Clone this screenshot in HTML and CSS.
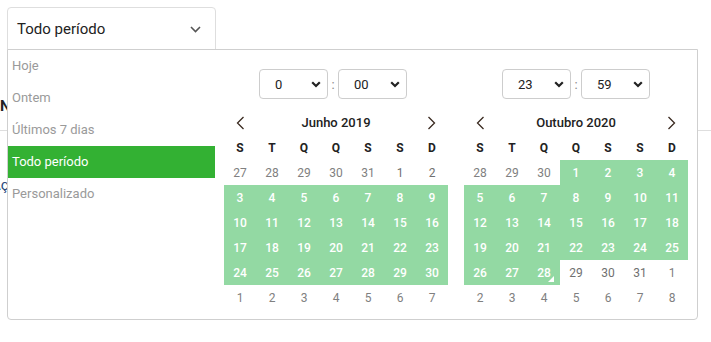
FILE: index.html
```html
<!DOCTYPE html>
<html lang="pt-BR">
<head>
    <meta charset="UTF-8">
    <title>Período</title>
    <link rel="stylesheet" href="styles.css">
</head>
<body>
<div class="page">
    <div class="period-picker">
        <button class="period-select">
            <span>Todo período</span>
            <svg class="period-caret" width="11" height="7" viewBox="0 0 11 7"><polyline points="1,1 5.5,5.5 10,1" fill="none" stroke="#555" stroke-width="1.6"/></svg>
        </button>
        <div class="period-dropdown">
            <ul class="ranges">
                <li>Hoje</li>
                <li>Ontem</li>
                <li>Últimos 7 dias</li>
                <li class="active">Todo período</li>
                <li>Personalizado</li>
            </ul>

            <div class="calendar">
                <div class="time-row">
                    <div class="time-select">
                        <select><option>0</option></select>
                        <svg width="10" height="7" viewBox="0 0 10 7"><polyline points="1.2,1.2 5,5 8.8,1.2" fill="none" stroke="#222" stroke-width="2.2"/></svg>
                    </div>
                    <span class="colon">:</span>
                    <div class="time-select">
                        <select><option>00</option></select>
                        <svg width="10" height="7" viewBox="0 0 10 7"><polyline points="1.2,1.2 5,5 8.8,1.2" fill="none" stroke="#222" stroke-width="2.2"/></svg>
                    </div>
                </div>
                <div class="month-head">
                    <svg class="nav" width="9" height="14" viewBox="0 0 9 14"><polyline points="7.5,1 1.5,7 7.5,13" fill="none" stroke="#3a2a20" stroke-width="1.3"/></svg>
                    <span class="month-title">Junho 2019</span>
                    <svg class="nav" width="9" height="14" viewBox="0 0 9 14"><polyline points="1.5,1 7.5,7 1.5,13" fill="none" stroke="#3a2a20" stroke-width="1.3"/></svg>
                </div>
                <div class="days week-names"><span>S</span><span>T</span><span>Q</span><span>Q</span><span>S</span><span>S</span><span>D</span></div>
                <div class="days">
                    <span class="off">27</span><span class="off">28</span><span class="off">29</span><span class="off">30</span><span class="off">31</span><span>1</span><span>2</span>
                    <span class="in">3</span><span class="in">4</span><span class="in">5</span><span class="in">6</span><span class="in">7</span><span class="in">8</span><span class="in">9</span>
                    <span class="in">10</span><span class="in">11</span><span class="in">12</span><span class="in">13</span><span class="in">14</span><span class="in">15</span><span class="in">16</span>
                    <span class="in">17</span><span class="in">18</span><span class="in">19</span><span class="in">20</span><span class="in">21</span><span class="in">22</span><span class="in">23</span>
                    <span class="in">24</span><span class="in">25</span><span class="in">26</span><span class="in">27</span><span class="in">28</span><span class="in">29</span><span class="in">30</span>
                    <span class="off">1</span><span class="off">2</span><span class="off">3</span><span class="off">4</span><span class="off">5</span><span class="off">6</span><span class="off">7</span>
                </div>
            </div>

            <div class="calendar calendar-right">
                <div class="time-row">
                    <div class="time-select">
                        <select><option>23</option></select>
                        <svg width="10" height="7" viewBox="0 0 10 7"><polyline points="1.2,1.2 5,5 8.8,1.2" fill="none" stroke="#222" stroke-width="2.2"/></svg>
                    </div>
                    <span class="colon">:</span>
                    <div class="time-select">
                        <select><option>59</option></select>
                        <svg width="10" height="7" viewBox="0 0 10 7"><polyline points="1.2,1.2 5,5 8.8,1.2" fill="none" stroke="#222" stroke-width="2.2"/></svg>
                    </div>
                </div>
                <div class="month-head">
                    <svg class="nav" width="9" height="14" viewBox="0 0 9 14"><polyline points="7.5,1 1.5,7 7.5,13" fill="none" stroke="#3a2a20" stroke-width="1.3"/></svg>
                    <span class="month-title">Outubro 2020</span>
                    <svg class="nav" width="9" height="14" viewBox="0 0 9 14"><polyline points="1.5,1 7.5,7 1.5,13" fill="none" stroke="#3a2a20" stroke-width="1.3"/></svg>
                </div>
                <div class="days week-names"><span>S</span><span>T</span><span>Q</span><span>Q</span><span>S</span><span>S</span><span>D</span></div>
                <div class="days">
                    <span class="off">28</span><span class="off">29</span><span class="off">30</span><span class="in">1</span><span class="in">2</span><span class="in">3</span><span class="in">4</span>
                    <span class="in">5</span><span class="in">6</span><span class="in">7</span><span class="in">8</span><span class="in">9</span><span class="in">10</span><span class="in">11</span>
                    <span class="in">12</span><span class="in">13</span><span class="in">14</span><span class="in">15</span><span class="in">16</span><span class="in">17</span><span class="in">18</span>
                    <span class="in">19</span><span class="in">20</span><span class="in">21</span><span class="in">22</span><span class="in">23</span><span class="in">24</span><span class="in">25</span>
                    <span class="in">26</span><span class="in">27</span><span class="in end">28</span><span>29</span><span>30</span><span>31</span><span class="off">1</span>
                    <span class="off">2</span><span class="off">3</span><span class="off">4</span><span class="off">5</span><span class="off">6</span><span class="off">7</span><span class="off">8</span>
                </div>
            </div>
        </div>
    </div>

    <div class="bg-table">
        <div class="bg-row bg-head">No</div>
        <div class="bg-row bg-cell">Açõ</div>
    </div>
</div>
</body>
</html>
```

FILE: styles.css
```css
body {
    margin: 0;
    padding: 0;
    background-color: #fff;
    font-family: Roboto, "Liberation Sans", sans-serif;
}
.page {
    height: 342px;
    box-sizing: border-box;
    padding: 7px 0 0 0;
    overflow: hidden;
}
.period-picker {
    position: relative;
    width: 209px;
    margin-left: 7px;
}
.period-select {
    display: flex;
    align-items: center;
    justify-content: space-between;
    width: 209px;
    height: 43px;
    padding: 0 14px 0 9px;
    border: 1px solid #dedede;
    border-radius: 4px 4px 0 0;
    background-color: #fff;
    font-family: inherit;
    font-size: 15px;
    color: #222;
    box-sizing: border-box;
}
.period-caret {
    margin-top: 1px;
}
.period-dropdown {
    position: absolute;
    top: 42px;
    left: 0;
    z-index: 5;
    display: flex;
    width: 691px;
    height: 271px;
    box-sizing: border-box;
    padding: 0 9px 9px 0;
    border: 1px solid #cfcfcf;
    border-radius: 0 0 4px 4px;
    background-color: #fff;
}
.ranges {
    list-style: none;
    margin: 0;
    padding: 0;
    width: 207px;
    flex: none;
}
.ranges li {
    height: 32px;
    line-height: 32px;
    padding-left: 4px;
    font-size: 13px;
    color: #9a9a9a;
}
.ranges li.active {
    background-color: #33b133;
    color: #fff;
}
.calendar {
    width: 224px;
    margin-left: 9px;
    padding-top: 19px;
}
.calendar-right {
    margin-left: 16px;
}
.time-row {
    display: flex;
    align-items: center;
    justify-content: center;
    height: 30px;
    margin-bottom: 11px;
}
.calendar:not(.calendar-right) .time-row {
    margin-right: 6px;
}
.time-select {
    position: relative;
    width: 69px;
    height: 30px;
}
.time-select select {
    appearance: none;
    -webkit-appearance: none;
    width: 100%;
    height: 100%;
    padding: 0 0 0 15px;
    border: 1px solid #cdcdcd;
    border-radius: 4px;
    background-color: #fff;
    font-family: inherit;
    font-size: 13px;
    color: #222;
    box-sizing: border-box;
}
.time-select svg {
    position: absolute;
    right: 7px;
    top: 12px;
    pointer-events: none;
}
.colon {
    width: 10px;
    text-align: center;
    font-size: 13px;
    color: #888;
}
.month-head {
    display: flex;
    align-items: center;
    justify-content: space-between;
    height: 25px;
    padding: 0 12px;
}
.month-title {
    font-size: 13px;
    font-weight: 500;
    color: #222;
}
.days {
    display: grid;
    grid-template-columns: repeat(7, 32px);
    grid-auto-rows: 25px;
}
.days span {
    position: relative;
    display: flex;
    align-items: center;
    justify-content: center;
    font-size: 12px;
    color: #707070;
}
.week-names span {
    font-weight: 700;
    color: #222;
}
.days span.off {
    color: #808080;
}
.days span.in {
    background-color: #93d9a3;
    color: #fff;
    font-weight: 500;
}
.days span.end::after {
    content: "";
    position: absolute;
    right: 6px;
    bottom: 3px;
    border-left: 6px solid transparent;
    border-bottom: 6px solid #fff;
}
.bg-table {
    margin-top: 38px;
    font-size: 15px;
}
.bg-row {
    height: 42px;
    border-bottom: 1px solid #dedede;
    line-height: 36px;
}
.bg-head {
    font-weight: 700;
    color: #222;
}
.bg-cell {
    height: 80px;
    line-height: 108px;
    border-bottom: none;
    color: #2a4a7a;
    text-indent: -9px;
}
```
